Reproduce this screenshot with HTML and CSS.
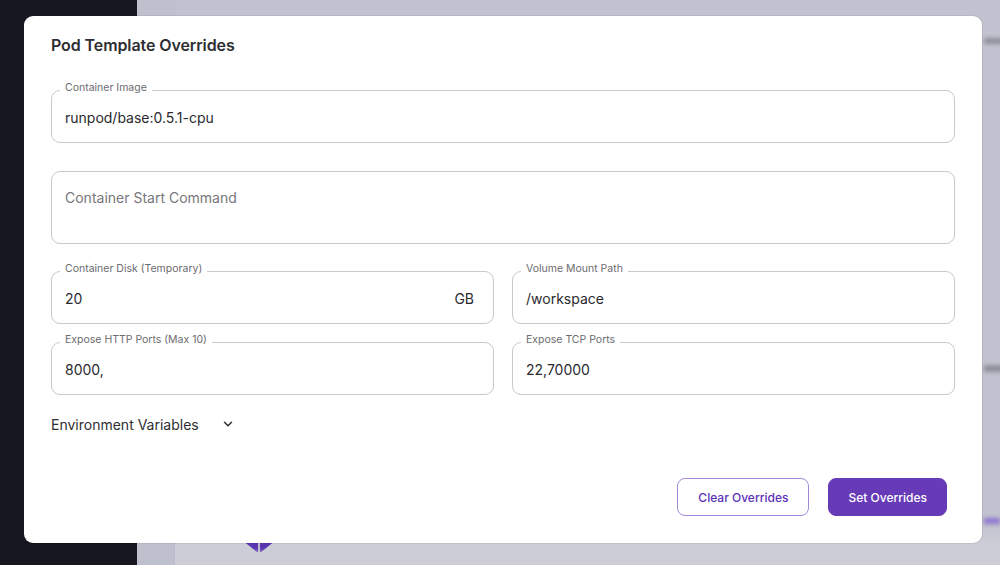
FILE: index.html
```html
<!DOCTYPE html>
<html>
<head>
<meta charset="utf-8">
<link rel="stylesheet" href="styles.css">
</head>
<body>
<div class="backdrop">
  <div class="sidebar"></div>
  <div class="main">
    <div class="col-strip"></div>
  </div>
</div>
<div class="blur logo"></div>
<div class="blur txt1"></div>
<div class="blur txt2"></div>
<div class="blur txt3"></div>
<div class="modal">
  <h2 class="title">Pod Template Overrides</h2>
  <div class="form">
    <fieldset class="field">
      <legend><span>Container Image</span></legend>
      <div class="value">runpod/base:0.5.1-cpu</div>
    </fieldset>
    <fieldset class="field tall nolabel">
      <div class="value placeholder">Container Start Command</div>
    </fieldset>
    <div class="grid">
      <fieldset class="field">
        <legend><span>Container Disk (Temporary)</span></legend>
        <div class="value split"><span>20</span><span class="unit">GB</span></div>
      </fieldset>
      <fieldset class="field">
        <legend><span>Volume Mount Path</span></legend>
        <div class="value">/workspace</div>
      </fieldset>
      <fieldset class="field">
        <legend><span>Expose HTTP Ports (Max 10)</span></legend>
        <div class="value">8000,</div>
      </fieldset>
      <fieldset class="field">
        <legend><span>Expose TCP Ports</span></legend>
        <div class="value">22,70000</div>
      </fieldset>
    </div>
    <div class="env">
      <span>Environment Variables</span>
      <svg class="chev" width="14" height="14" viewBox="0 0 24 24"><path d="M6 9l6 6 6-6" fill="none" stroke="#333" stroke-width="2.6" stroke-linecap="round" stroke-linejoin="round"/></svg>
    </div>
  </div>
  <div class="actions">
    <button class="btn outline">Clear Overrides</button>
    <button class="btn primary">Set Overrides</button>
  </div>
</div>
</body>
</html>
```
FILE: styles.css
```css
* { box-sizing: border-box; }
html, body { margin: 0; padding: 0; }
body {
  width: 1000px;
  height: 565px;
  overflow: hidden;
  font-family: Inter, "Noto Sans", sans-serif;
  position: relative;
  background: #c3c4d1;
}
.backdrop {
  display: flex;
  height: 565px;
}
.sidebar {
  width: 137px;
  background: #16161f;
}
.main {
  flex: 1;
  display: flex;
  background: linear-gradient(#c2c3d0 0, #c2c3d0 525px, #cdcdd7 545px, #cdcdd7 100%);
}
.col-strip {
  width: 38px;
  background: #bfc0cd;
  border-right: 1px solid #babbc9;
}
.blur {
  position: absolute;
  filter: blur(2px);
}
.logo {
  left: 237px;
  top: 536px;
  width: 44px;
  height: 16px;
  background: #5a35b0;
  clip-path: polygon(0 0, 48% 0, 48% 100%, 52% 100%, 52% 0, 100% 0, 55% 100%, 45% 100%);
}
.txt1 {
  left: 984px;
  top: 38px;
  width: 20px;
  height: 6px;
  background: #8d8e99;
}
.txt2 {
  left: 984px;
  top: 365px;
  width: 20px;
  height: 7px;
  background: #8d8e99;
}
.txt3 {
  left: 984px;
  top: 518px;
  width: 16px;
  height: 6px;
  background: #8d73d0;
}
.modal {
  position: absolute;
  left: 24px;
  top: 16px;
  width: 958px;
  height: 527px;
  background: #fff;
  border-radius: 9px;
  box-shadow: 0 0 0 1px rgba(0,0,0,0.06);
  padding: 0 27px;
  display: flex;
  flex-direction: column;
}
.title {
  margin: 19px 0 0;
  font-size: 16px;
  font-weight: 600;
  color: #2e2e33;
  line-height: 20px;
  letter-spacing: -0.1px;
}
.form {
  margin-top: 35px;
  display: flex;
  flex-direction: column;
}
.field {
  margin: 0;
  padding: 0 13px;
  border: 1px solid #c9c9cc;
  border-radius: 9px;
  min-width: 0;
  height: 59px;
  position: relative;
  top: -6px;
}
.field legend {
  font-size: 10.5px;
  color: #6b6b70;
  padding: 0 5px;
  margin-left: -5px;
  line-height: 12px;
}
.field legend span {
  position: relative;
  top: -2px;
}
.field .value {
  font-size: 14px;
  color: #2a2a2e;
  line-height: 20px;
  padding-top: 12px;
}
.field.nolabel {
  top: 0;
  height: 73px;
  padding-top: 16px;
}
.field.nolabel .value { padding-top: 0; }
.placeholder { color: #77777c !important; }
.split {
  display: flex;
  justify-content: space-between;
  padding-right: 6px;
}
.form > .field:first-child { margin-bottom: 22px; }
.form > .field.tall { margin-bottom: 21px; }
.grid {
  display: grid;
  grid-template-columns: 1fr 1fr;
  column-gap: 18px;
  row-gap: 12px;
  margin-top: 6px;
}
.env {
  margin-top: 13px;
  display: flex;
  align-items: center;
  font-size: 14px;
  color: #2e2e33;
  height: 20px;
}
.chev { margin-left: 22px; }
.actions {
  margin-top: auto;
  margin-bottom: 27px;
  display: flex;
  justify-content: flex-end;
  gap: 19px;
  padding-right: 8px;
}
.btn {
  height: 38px;
  border-radius: 8px;
  font-family: Inter, "Noto Sans", sans-serif;
  font-size: 12px;
  font-weight: 500;
  cursor: pointer;
}
.outline {
  padding: 0 20px;
  background: #fff;
  border: 1px solid #a38ad9;
  color: #5b30b8;
}
.primary {
  padding: 0 19px;
  background: #673ab7;
  border: 1px solid #673ab7;
  color: #fff;
}
```
